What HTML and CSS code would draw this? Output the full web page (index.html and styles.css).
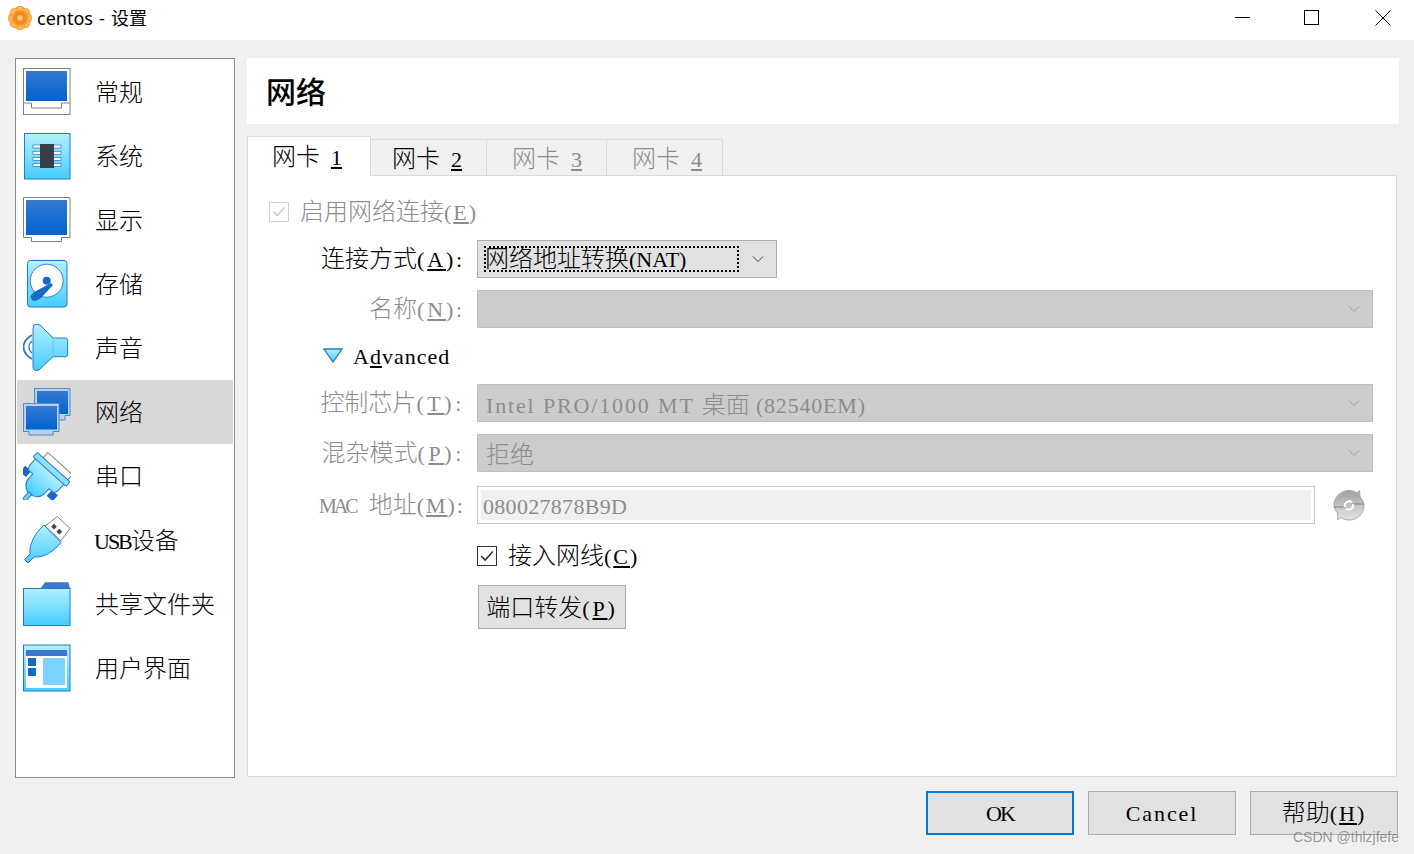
FILE: index.html
```html
<!DOCTYPE html>
<html lang="zh-CN">
<head>
<meta charset="utf-8">
<title>centos - 设置</title>
<link rel="stylesheet" href="styles.css">
</head>
<body>
<svg class="defs" width="0" height="0" aria-hidden="true">
  <defs>
    <linearGradient id="sky" x1="0" y1="0" x2="0" y2="1"><stop offset="0" stop-color="#b4f0ff"/><stop offset="1" stop-color="#45ccff"/></linearGradient>
    <linearGradient id="screen" x1="0" y1="0" x2="0" y2="1"><stop offset="0" stop-color="#347ad2"/><stop offset="1" stop-color="#0063d0"/></linearGradient>
    <linearGradient id="steel" x1="0" y1="0" x2="0" y2="1"><stop offset="0" stop-color="#a0a0a0"/><stop offset="1" stop-color="#e4e4e4"/></linearGradient>
    <radialGradient id="flower"><stop offset="0" stop-color="#ee7d1e"/><stop offset=".7" stop-color="#f28a24"/><stop offset="1" stop-color="#f9ab42"/></radialGradient>
  </defs>
</svg>
<div class="window">
  <header class="titlebar">
    <svg class="app-icon" viewBox="0 0 24 24" width="24" height="24">
      <g fill="#fbb84e" stroke="#d8741e" stroke-width=".5">
        <circle cx="12" cy="4.500" r="4.500"/><circle cx="17.300" cy="6.700" r="4.500"/><circle cx="19.500" cy="12" r="4.500"/><circle cx="17.300" cy="17.300" r="4.500"/><circle cx="12" cy="19.500" r="4.500"/><circle cx="6.700" cy="17.300" r="4.500"/><circle cx="4.500" cy="12" r="4.500"/><circle cx="6.700" cy="6.700" r="4.500"/>
      </g>
      <circle cx="12" cy="12" r="8.500" fill="url(#flower)"/>
      <circle cx="12" cy="12" r="2.800" fill="#ffc870"/>
    </svg>
    <span class="title-text">centos - 设置</span>
    <div class="win-controls">
      <svg viewBox="0 0 16 16" width="16" height="16"><path d="M0 7.500h15" stroke="#000" fill="none"/></svg>
      <svg class="win-max" viewBox="0 0 16 16" width="16" height="16"><rect x=".5" y=".5" width="14" height="14" stroke="#000" fill="none"/></svg>
      <svg viewBox="0 0 16 16" width="16" height="16"><path d="M.5.5l15 15M15.500.5l-15 15" stroke="#000" fill="none"/></svg>
    </div>
  </header>

  <main class="body">
    <nav class="sidebar">
      <a class="nav-row">
        <svg class="nav-icon" viewBox="0 0 48 48"><rect x=".5" y=".5" width="46.500" height="46" fill="#fff" stroke="#808080"/><rect x="3" y="3" width="41" height="30" fill="url(#screen)"/><path d="M.5 35H8.500V40H38.500V35H47" fill="none" stroke="#808080"/></svg>
        <span class="nav-text">常规</span>
      </a>
      <a class="nav-row">
        <svg class="nav-icon" viewBox="0 0 48 48"><rect x="1.500" y="1.500" width="45.500" height="45.500" fill="url(#sky)" stroke="#2a78c8"/><g fill="#fff" stroke="#3d80cc" stroke-width=".8"><rect x="10" y="13" width="28" height="3"/><rect x="10" y="19.300" width="28" height="3"/><rect x="10" y="25.400" width="28" height="3"/><rect x="10" y="31.400" width="28" height="3"/></g><rect x="17" y="12" width="14" height="24" fill="#393d48"/></svg>
        <span class="nav-text">系统</span>
      </a>
      <a class="nav-row">
        <svg class="nav-icon" viewBox="0 0 48 48"><path d="M.5 1.500H47V41.500H38.500V45.500H8.500V41.500H.5Z" fill="#fff" stroke="#808080"/><rect x="3" y="4" width="41" height="35" fill="url(#screen)"/></svg>
        <span class="nav-text">显示</span>
      </a>
      <a class="nav-row">
        <svg class="nav-icon" viewBox="0 0 48 48"><rect x="4.500" y=".5" width="39.500" height="46.500" rx="3" fill="url(#sky)" stroke="#2a78c8"/><circle cx="23.700" cy="20.700" r="16.500" fill="#fff" stroke="#3d80cc"/><circle cx="23.700" cy="20.700" r="4" fill="#1868c8"/><path d="M8 38C7 35 10 33 13 31L28 23L30 25L18 38C14 41 9 42 8 38Z" fill="#1868c8"/></svg>
        <span class="nav-text">存储</span>
      </a>
      <a class="nav-row">
        <svg class="nav-icon" viewBox="0 0 48 48"><path d="M10 4Q10 0 14 0Q16 0 18 2L30 14H42.500Q44.700 14 44.700 16.500V30.500Q44.700 32.700 42.500 32.700H30L16 46Q10 48 10 43Z" fill="url(#sky)" stroke="#2a78c8"/><path d="M30 14V32.700" stroke="#6cc4f0" fill="none"/><path d="M9 11Q.5 16 .5 23T9 35" fill="none" stroke="#2a78c8" stroke-width="1.800"/><path d="M9 17Q6 19 6 23T9 29" fill="none" stroke="#2a78c8" stroke-width="1.200"/></svg>
        <span class="nav-text">声音</span>
      </a>
      <a class="nav-row is-active">
        <svg class="nav-icon" viewBox="0 0 48 48"><path d="M11.500.5H47V27.500H42V32H36V27.500H11.500Z" fill="#b4d2f0" stroke="#5a8ab4"/><rect x="14" y="3" width="31" height="23" fill="url(#screen)"/><path d="M.5 15.500H36V43.500H30V47H6V43.500H.5Z" fill="#b4d2f0" stroke="#5a8ab4"/><rect x="3" y="18" width="31" height="23.500" fill="url(#screen)"/></svg>
        <span class="nav-text">网络</span>
      </a>
      <a class="nav-row">
        <svg class="nav-icon" viewBox="0 0 48 48"><g transform="translate(24 24) rotate(42)"><rect x="-15" y="-18" width="33" height="8" fill="#fff" stroke="#808080"/><rect x="-23" y="7" width="8" height="8" fill="#1868c8"/><rect x="13" y="7" width="8" height="8" fill="#1868c8"/><path d="M-20-6H18V4L16 8H10V14A11 11 0 0 1-12 14V8H-18L-20 4Z" fill="url(#sky)" stroke="#2a78c8"/><rect x="-23" y="-11" width="44" height="6" rx="1" fill="#8ee0ff" stroke="#2a78c8"/><rect x="-3" y="24" width="4" height="9" fill="#6cd4ff" stroke="#2a78c8"/></g></svg>
        <span class="nav-text">串口</span>
      </a>
      <a class="nav-row is-usb">
        <svg class="nav-icon" viewBox="0 0 48 48"><path d="M22 10L34.300.5L47 12.300L38 24.700Z" fill="#fff" stroke="#808080"/><g fill="#444"><rect x="29" y="8.700" width="4" height="4" transform="rotate(45 31 10.700)"/><rect x="34.300" y="13.700" width="4" height="4" transform="rotate(45 36.300 15.700)"/></g><path d="M21 9L38 26.500C32 34 22 42 11 41L5 47L1.500 43.500L7 38C6 28 12 17 21 9Z" fill="url(#sky)" stroke="#2a78c8"/></svg>
        <span class="nav-text"><span class="l caps">USB</span>设备</span>
      </a>
      <a class="nav-row">
        <svg class="nav-icon" viewBox="0 0 48 48"><path d="M17.700 8.300L22 2.300H45.300L47 8.300Z" fill="#3a78d0"/><rect x=".5" y="8.500" width="46.500" height="37" fill="url(#sky)" stroke="#2a78c8"/></svg>
        <span class="nav-text">共享文件夹</span>
      </a>
      <a class="nav-row">
        <svg class="nav-icon" viewBox="0 0 48 48"><rect x=".5" y="1" width="46.500" height="46" fill="url(#sky)" stroke="#2a78c8"/><rect x="3" y="6" width="41" height="38" fill="#fff"/><rect x="3" y="6" width="41" height="6" fill="#3a78d0"/><rect x="5" y="14" width="8" height="8" fill="#1868c8"/><rect x="5" y="24" width="8" height="8" fill="#1868c8"/><rect x="20" y="14" width="22" height="27" fill="#7dd3ff"/></svg>
        <span class="nav-text">用户界面</span>
      </a>
    </nav>

    <section class="content">
      <h1 class="page-title">网络</h1>
      <div class="tabs">
        <div class="tab is-active">网卡<span class="l num"><u>1</u></span></div>
        <div class="tab is-narrow is-second">网卡<span class="l num"><u>2</u></span></div>
        <div class="tab is-disabled">网卡<span class="l num"><u>3</u></span></div>
        <div class="tab is-narrow is-disabled">网卡<span class="l num"><u>4</u></span></div>
      </div>
      <div class="panel">
        <div class="form">
          <label class="check-row wide is-muted enable">
            <span class="box box-muted"><svg viewBox="0 0 20 20" width="18" height="18"><path d="M4 10l4 4 8-9" fill="none" stroke="#c4c4c4" stroke-width="1.500"/></svg></span>
            <span class="check-text">启用网络连接<span class="l key-tight">(<u>E</u>)</span></span>
          </label>

          <span class="field-label">连接方式<span class="l key">(<u>A</u>):</span></span>
          <div class="combo is-short">
            <span class="focus-ring">网络地址转换<span class="l">(NAT)</span></span>
            <svg class="chevron" viewBox="0 0 12 8" width="12" height="8"><path d="M1 1.500l5 5 5-5" fill="none" stroke="#444"/></svg>
          </div>

          <span class="field-label is-muted">名称<span class="l key">(<u>N</u>):</span></span>
          <div class="combo is-disabled">
            <span></span>
            <svg class="chevron" viewBox="0 0 12 8" width="12" height="8"><path d="M1 1.500l5 5 5-5" fill="none" stroke="#a0a0a0"/></svg>
          </div>

          <div class="advanced wide">
            <svg viewBox="0 0 20 16" width="20" height="16"><path d="M1 1H19L10 14Z" fill="url(#sky)" stroke="#2a78c8" stroke-width="1.300"/></svg>
            <span class="l spaced adv-text">A<u>d</u>vanced</span>
          </div>

          <span class="field-label is-muted">控制芯片<span class="l key-wide">(<u>T</u>):</span></span>
          <div class="combo is-disabled">
            <span class="value"><span class="l model">Intel PRO/1000 MT </span>桌面<span class="l model-code"> (82540EM)</span></span>
            <svg class="chevron" viewBox="0 0 12 8" width="12" height="8"><path d="M1 1.500l5 5 5-5" fill="none" stroke="#a0a0a0"/></svg>
          </div>

          <span class="field-label is-muted">混杂模式<span class="l key-wide">(<u>P</u>):</span></span>
          <div class="combo is-disabled">
            <span class="value">拒绝</span>
            <svg class="chevron" viewBox="0 0 12 8" width="12" height="8"><path d="M1 1.500l5 5 5-5" fill="none" stroke="#a0a0a0"/></svg>
          </div>

          <span class="field-label is-muted mac"><span class="l caps mac-name">MAC</span><span class="mac-gap">地址</span><span class="l key-tight">(<u>M</u>):</span></span>
          <div class="mac-row">
            <div class="mac-input"><span class="l">080027878B9D</span></div>
            <svg class="refresh" viewBox="0 0 32 32" width="32" height="32">
              <path d="M16 1.500C19 1.500 22 2.500 24 4L26.500 1.500L27 8C29.500 10.500 31 13 31 16.500C31 24.500 24.500 31 16.500 31C13 31 10 30 7.500 28L5 31L4.500 24C2.500 21.500 1 19 1 16C1 8 8 1.500 16 1.500Z" fill="url(#steel)" stroke="#a8a8a8"/>
              <path d="M1 18H12M20 15H31" stroke="#808080" fill="none"/>
              <path d="M12 18C11 14 15 11 19 13M20 15C21 19 17 22 13 20" fill="none" stroke="#fff" stroke-width="2"/>
            </svg>
          </div>

          <span></span>
          <label class="check-row connected">
            <span class="box"><svg viewBox="0 0 20 20" width="18" height="18"><path d="M3.500 10l4.500 4.500 8.500-9.500" fill="none" stroke="#333" stroke-width="1.800"/></svg></span>
            <span class="check-text">接入网线<span class="l key-tight">(<u>C</u>)</span></span>
          </label>

          <span></span>
          <div class="forward-cell"><button class="btn btn-forward" type="button">端口转发<span class="l key">(<u>P</u>)</span></button></div>
        </div>
      </div>
    </section>
  </main>

  <footer class="footer">
    <button class="btn btn-foot is-default" type="button"><span class="l caps">OK</span></button>
    <button class="btn btn-foot" type="button"><span class="l extra">Cancel</span></button>
    <button class="btn btn-foot" type="button">帮助<span class="l key-tight">(<u>H</u>)</span></button>
    <span class="watermark">CSDN @thlzjfefe</span>
  </footer>
</div>
</body>
</html>
```

FILE: styles.css
```css
* { box-sizing: border-box; }
html, body { margin: 0; padding: 0; }
body {
  width: 1414px;
  height: 854px;
  overflow: hidden;
  background: #f0f0f0;
  color: #000;
  font-family: "Noto Sans CJK SC", sans-serif;
  font-size: 24px;
  font-weight: 300;
  line-height: 30px;
}
.defs { position: absolute; }
.l { font-family: "Liberation Serif", "Noto Sans CJK SC", serif; font-size: 22px; font-weight: 400; line-height: 1; }
.key { letter-spacing: 2.8px; }
.key-tight { letter-spacing: 2px; }
.key-wide { letter-spacing: 3.6px; }
.caps { letter-spacing: -2px; }
.spaced { letter-spacing: 1px; }
.model { letter-spacing: 1.85px; }
.model-code { letter-spacing: .8px; }
.extra { letter-spacing: 1.9px; }
.num { margin-left: 11px; }
u { text-underline-offset: 2px; }

.window { display: flex; flex-direction: column; width: 1414px; height: 854px; }

.titlebar {
  display: flex; align-items: center;
  height: 40px; padding: 0 23px 4px 8px;
  background: #fff;
}
.app-icon { flex: none; }
.title-text {
  margin-left: 5px;
  font-family: "Noto Sans", "Noto Sans CJK SC", sans-serif;
  font-size: 18px; font-weight: 400; line-height: 28px;
  word-spacing: 1.5px;
}
.win-controls { display: flex; gap: 54px; margin-left: auto; }
.win-max { margin: 0 1px 0 -1px; }

.body { display: flex; gap: 12px; height: 738px; padding: 18px 15px 0; }

.sidebar {
  flex: none; width: 220px; height: 720px;
  padding: 1px;
  background: #fff;
  border: 1px solid #8a8a98;
}
.nav-row { display: flex; align-items: center; gap: 24px; height: 64px; padding-left: 6px; }
.nav-row.is-active { background: #d8d8d8; }
.nav-row.is-usb { gap: 23px; }
.nav-icon { flex: none; width: 48px; height: 48px; }
.nav-text { padding-bottom: 2px; }

.content { flex: 1; display: flex; flex-direction: column; min-width: 0; }
.page-title {
  height: 66px; margin: 0; padding-left: 19px;
  background: #fff;
  font-size: 30px; font-weight: 500; line-height: 64px;
}
.tabs { display: flex; align-items: flex-end; height: 40px; margin-top: 12px; position: relative; z-index: 1; }
.tab {
  width: 120px; height: 36px; margin-bottom: 1px; padding-left: 25px;
  background: #f0f0f0;
  border: 1px solid #d9d9d9; border-left: 0; border-bottom: 0;
  white-space: nowrap; line-height: 34px;
}
.tab.is-narrow { width: 116px; }
.tab.is-second { padding-left: 21px; }
.tab.is-active {
  width: 124px; height: 40px; margin-bottom: 0;
  background: #fff;
  border-left: 1px solid #d9d9d9;
  line-height: 36px; padding-left: 24px;
}
.tab.is-disabled { color: #8c8c8c; }

.panel {
  flex: 1; margin: -1px 2px 1px 0;
  padding: 18px 23px 0 21px;
  background: #fff;
  border: 1px solid #d9d9d9;
}
.form {
  display: grid;
  grid-template-columns: 196px 1fr;
  column-gap: 12px; row-gap: 12px;
}
.wide { grid-column: 1 / -1; }
.is-muted { color: #8c8c8c; }
.field-label { display: block; height: 38px; line-height: 34px; text-align: right; white-space: nowrap; }
.field-label.mac { margin-top: 2px; }
.mac-name { font-size: 20px; letter-spacing: -3px; }
.mac-gap { margin-left: 13px; }

.check-row { display: flex; align-items: center; gap: 11px; height: 36px; white-space: nowrap; }
.check-row.enable { height: 34px; padding-top: 2px; }
.check-row.connected { margin-top: 2px; }
.check-text { padding-bottom: 4px; }
.box {
  flex: none; display: flex; align-items: center; justify-content: center;
  width: 20px; height: 20px;
  border: 1px solid #333;
  background: #fff;
}
.box-muted { border-color: #cfcfcf; }

.combo {
  display: flex; align-items: center; justify-content: space-between;
  height: 38px; padding: 0 12px 0 8px;
  white-space: nowrap;
}
.combo.is-short {
  width: 300px; padding-left: 6px;
  background: #e1e1e1; border: 1px solid #adadad;
}
.combo.is-disabled {
  background: #ccc; border: 1px solid #bfbfbf;
  color: #8c8c8c;
}
.focus-ring {
  display: block; width: 255px; height: 26px;
  line-height: 21px;
  outline: 2px dotted #000; outline-offset: -2px;
  padding-left: 1px;
}
.value { line-height: 34px; }

.advanced { display: flex; align-items: center; gap: 10px; height: 32px; padding-left: 54px; }
.adv-text { margin-top: 2px; }

.mac-row { display: flex; align-items: center; gap: 18px; margin-top: 2px; height: 38px; }
.mac-input {
  flex: 1; height: 38px; padding: 3px;
  border: 1px solid #c8c8c8;
  background: #fff;
}
.mac-input .l { display: block; height: 30px; padding-left: 2px; background: #f0f0f0; color: #8c8c8c; line-height: 33px; letter-spacing: .3px; }
.refresh { flex: none; margin-right: 8px; }

.forward-cell { margin-top: -1px; padding-left: 1px; }
.btn {
  font: inherit; color: #000;
  background: #e1e1e1; border: 1px solid #adadad; border-radius: 0;
  padding: 0; white-space: nowrap;
}
.btn-forward { width: 148px; height: 44px; padding-bottom: 2px; }

.footer {
  position: relative;
  display: flex; justify-content: flex-end; gap: 14px;
  height: 76px; padding: 13px 16px 0 0;
}
.btn-foot { width: 148px; height: 44px; padding-bottom: 4px; }
.btn-foot.is-default { border: 2px solid #0078d7; }
.watermark {
  position: absolute; right: 15px; bottom: 8px;
  font-family: "Liberation Sans", sans-serif;
  font-size: 14px; font-weight: 400; line-height: 18px;
  color: rgba(120, 120, 120, .75);
}
```
